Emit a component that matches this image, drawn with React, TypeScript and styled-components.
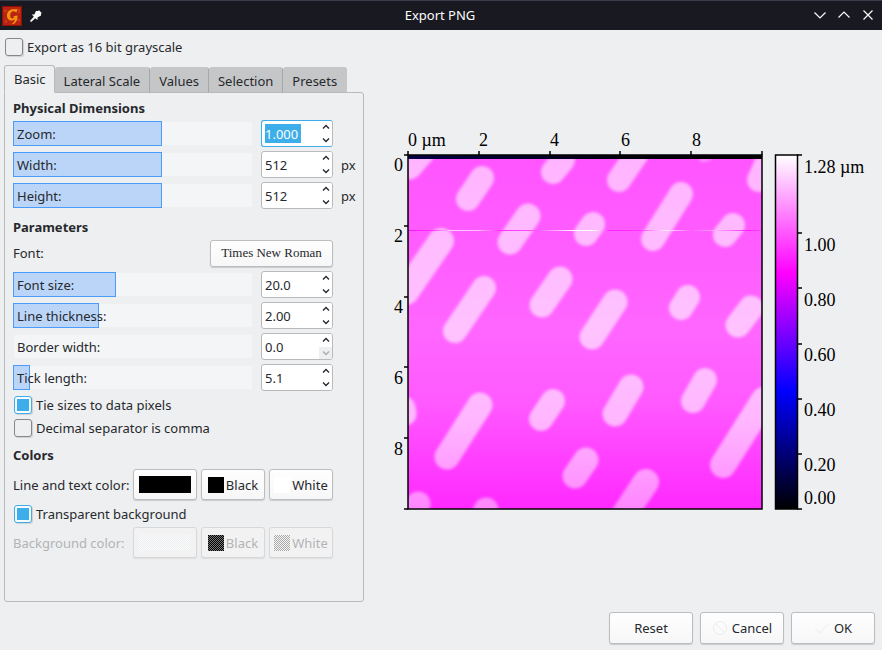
import React, { useState } from "react";
import styled, { createGlobalStyle } from "styled-components";

const sans = `"Noto Sans", "Open Sans", sans-serif`;
const serif = `"Liberation Serif", "Times New Roman", serif`;

const GlobalStyle = createGlobalStyle`
  *, *::before, *::after { box-sizing: border-box; }
  body { margin: 0; background: #eeeff1; }
  button, input { font: inherit; color: inherit; margin: 0; }
`;

const Dialog = styled.div`
  min-height: 100vh;
  display: flex;
  flex-direction: column;
  background: #eeeff1;
  color: #26292c;
  font: 13px/18px ${sans};
`;

const TitleBar = styled.header`
  display: grid;
  grid-template-columns: 72px 1fr 74px;
  align-items: center;
  height: 30px;
  background: #191921;
  border-top: 1px solid #3b3c4a;
  color: #fcfcfc;
`;

const TitleIcons = styled.div`
  display: flex;
  align-items: center;
  gap: 8px;
  padding-left: 2px;
`;

const Title = styled.h1`
  margin: 0;
  padding-bottom: 2px;
  font-size: 13px;
  font-weight: 400;
  text-align: center;
`;

const WindowButtons = styled.div`
  display: flex;
`;

const WindowButton = styled.button`
  display: grid;
  place-items: center;
  width: 24px;
  height: 24px;
  padding: 0 0 2px;
  border: 0;
  background: none;
`;

const Main = styled.main`
  flex: 1;
  display: grid;
  grid-template-columns: 364px minmax(0, 1fr);
  column-gap: 16px;
`;

const Settings = styled.div`
  display: flex;
  flex-direction: column;
  padding: 0 0 10px 4px;
`;

const TopRow = styled.div`
  height: 35px;
  display: flex;
  align-items: center;
  padding-bottom: 2px;
`;

const Tabs = styled.div`
  display: flex;
  align-items: flex-end;
  height: 28px;
  margin-bottom: -1px;
`;

const Tab = styled.button<{ $active?: boolean }>`
  position: relative;
  height: ${(p) => (p.$active ? 28 : 26)}px;
  padding: ${(p) => (p.$active ? "0 8px 0 9px" : "2px 9px 0")};
  border: 1px solid ${(p) => (p.$active ? "#b9babc" : "#c5c6c8")};
  border-bottom-color: ${(p) => (p.$active ? "#eeeff1" : "#b9babc")};
  border-right-color: ${(p) => (p.$active ? "#b9babc" : "#a6a7a9")};
  border-left-width: ${(p) => (p.$active ? 1 : 0)}px;
  border-radius: 3px 3px 0 0;
  background: ${(p) => (p.$active ? "#eeeff1" : "#c5c6c8")};
  z-index: ${(p) => (p.$active ? 1 : 0)};
  &:last-child { border-right-color: #c5c6c8; }
`;

const Panel = styled.div`
  flex: 1;
  padding: 4px 7px 4px 8px;
  border: 1px solid #b9babc;
  border-radius: 0 3px 3px 3px;
`;

const Heading = styled.h2`
  margin: 0;
  font-size: 13px;
  line-height: 23px;
  font-weight: 700;
`;

const Section = styled.section`
  & + & { margin-top: 7px; }
`;

const Rows = styled.div`
  display: flex;
  flex-direction: column;
  gap: 4px;
`;

const Row = styled.div`
  display: grid;
  grid-template-columns: minmax(0, 1fr) 72px 15px;
  column-gap: 8px;
  align-items: center;
`;

const Slider = styled.label`
  display: grid;
  grid-template-rows: 27px;
  align-items: center;
  & > * { grid-area: 1 / 1; }
`;

const Track = styled.span`
  height: 23px;
  margin: 0 1px;
  background: #f4f5f7;
`;

const Fill = styled.span`
  height: 25px;
  border: 1px solid #4b9bfa;
  background: #bbd5f9;
`;

const SliderText = styled.span`
  padding-left: 4px;
`;

const Range = styled.input`
  width: 100%;
  height: 26px;
  opacity: 0;
`;

const Spin = styled.div`
  display: grid;
  grid-template-columns: 1fr 13px;
  height: 27px;
  border: 1px solid #b9babc;
  border-radius: 3px;
  background: #fff;
  overflow: hidden;
  &:focus-within { border-color: #3daee9; }
`;

const FocusSpin = styled(Spin)`
  border-color: #3daee9 #b9babc #3daee9 #3daee9;
`;

const SpinValue = styled.input<{ $selected?: boolean }>`
  width: ${(p) => (p.$selected ? 36 : 50)}px;
  height: 19px;
  align-self: center;
  margin-left: 3px;
  padding: 0;
  border: 0;
  outline: 0;
  background: ${(p) => (p.$selected ? "#3daee9" : "transparent")};
  color: ${(p) => (p.$selected ? "#fcfcfc" : "inherit")};
`;

const Steps = styled.div`
  display: grid;
  grid-template-rows: 1fr 1fr;
`;

const Step = styled.button`
  display: grid;
  place-items: center;
  min-height: 0;
  padding: 0;
  border: 0;
  background: #fff;
  color: #232629;
  &:disabled { background: #eeeff1; color: #a9abad; }
`;

const Check = styled.label`
  display: flex;
  align-items: center;
  gap: 4px;
  height: 23px;
  padding-left: 1px;
`;

const Box = styled.input`
  appearance: none;
  display: grid;
  place-items: center;
  width: 18px;
  height: 18px;
  border: 1px solid #85878a;
  border-radius: 3px;
  box-shadow: 1px 1px 1px #cfd0d2;
  &:checked { border-color: #3daee9; background: #fafbfc; }
  &:checked::before { content: ""; width: 12px; height: 12px; background: #3daee9; }
`;

const Checks = styled.div`
  margin: 2px 0 -2px;
`;

const FontRow = styled.div`
  display: flex;
  align-items: center;
  justify-content: space-between;
  height: 28px;
  padding-right: 23px;
`;

const Button = styled.button`
  display: flex;
  align-items: center;
  justify-content: center;
  padding: 0;
  border: 1px solid #bcbdbf;
  border-radius: 3px;
  background: linear-gradient(#fefefe, #f7f7f8);
  box-shadow: 0 1px 1px #c9cacc;
  color: inherit;
  &:disabled {
    border-color: #d7d8da;
    background: #f2f2f3;
    color: #b2b3b5;
    box-shadow: 0 1px 1px #dcdddf;
  }
`;

const FontButton = styled(Button)`
  width: 123px;
  height: 27px;
  font-family: ${serif};
`;

const ColorRow = styled.div<{ $off?: boolean }>`
  display: grid;
  grid-template-columns: minmax(0, 1fr) 64px 64px 64px;
  column-gap: 4px;
  align-items: center;
  height: 35px;
  padding-right: 23px;
  white-space: nowrap;
  color: ${(p) => (p.$off ? "#b2b3b5" : "inherit")};
`;

const ColorButton = styled(Button)`
  height: 31px;
  gap: 2px;
`;

const Swatch = styled.span<{ $color: string; $wide?: boolean; $mesh?: string }>`
  width: ${(p) => (p.$wide ? 52 : 16)}px;
  height: ${(p) => (p.$wide ? 17 : 16)}px;
  background: ${(p) =>
    p.$mesh
      ? `repeating-conic-gradient(${p.$mesh} 0 25%, ${p.$color} 0 50%) 0 0 / 2px 2px`
      : p.$color};
`;

const Preview = styled.div`
  display: grid;
  place-items: center;
  svg { width: 100%; max-width: 478px; height: auto; }
`;

const Footer = styled.footer`
  display: flex;
  justify-content: flex-end;
  gap: 7px;
  padding: 0 7px 6px;
`;

const Action = styled(Button)`
  width: 84px;
  height: 32px;
  gap: 4px;
`;

function AppLogo() {
  return (
    <svg width="20" height="20" viewBox="0 0 20 20" aria-hidden="true">
      <rect width="20" height="20" fill="#8c1108" />
      <rect x="1" y="1" width="18" height="18" fill="#b92410" />
      <path d="M2 4h3v2H2zM15 13h3v2h-3zM3 14h2v3H3zM16 3h2v4h-2z" fill="#cb3a17" />
      <path
        d="M15.500 3 14.500 6.500 12 5.200C9.500 5 8.200 7 8.200 9.300c0 2.200.8 3.300 2.300 3.200L12.500 11 11 10.200 15.500 9.500C15.500 13 15.200 16.500 10.500 18.500L10.200 17.500C12.300 16.300 12.800 15 12.800 13.200 10.500 15.300 5 15.200 5 9.500 5 5.500 8 3 12 3.300z"
        fill="#f59311"
      />
    </svg>
  );
}

function PinIcon() {
  return (
    <svg width="12" height="12" viewBox="0 0 12 12" aria-hidden="true">
      <path d="M6 1h2l1-.7 2.700 2.700-.7 1v1.500L7.500 7.500V10L5.200 8.200 1.500 11.700H.3V10.500L3.800 6.800 1.800 4.500H4.300z" fill="#fcfcfc" />
    </svg>
  );
}

function Glyph({ d }: { d: string }) {
  return (
    <svg width="12" height="12" viewBox="0 0 12 12" fill="none" stroke="currentColor" strokeWidth="1.200" aria-hidden="true">
      <path d={d} />
    </svg>
  );
}

function StepArrow({ up }: { up?: boolean }) {
  return (
    <svg width="8" height="6" viewBox="0 0 8 6" fill="none" stroke="currentColor" strokeWidth="1.300" aria-hidden="true">
      <path d={up ? "M1 4.500 4 1.500 7 4.500" : "M1 1.500 4 4.500 7 1.500"} />
    </svg>
  );
}

type SettingProps = {
  label: string;
  value: string;
  fraction: number;
  unit?: string;
  selected?: boolean;
};

function Setting({ label, value, fraction, unit, selected }: SettingProps) {
  const [text, setText] = useState(value);
  const [level, setLevel] = useState(fraction);
  const Frame = selected ? FocusSpin : Spin;
  const digits = (value.split(".")[1] || "").length;
  const bump = (sign: number) => setText((Number(text) + sign * 10 ** -digits).toFixed(digits));
  return (
    <Row>
      <Slider>
        <Track />
        {level > 0 && <Fill style={{ width: `${level}%` }} />}
        <SliderText>{label}</SliderText>
        <Range type="range" min={0} max={100} value={level} onChange={(e) => setLevel(Number(e.target.value))} />
      </Slider>
      <Frame>
        <SpinValue aria-label={label} $selected={selected} value={text} onChange={(e) => setText(e.target.value)} />
        <Steps>
          <Step aria-label="Increase" onClick={() => bump(1)}><StepArrow up /></Step>
          <Step aria-label="Decrease" disabled={Number(text) === 0} onClick={() => bump(-1)}><StepArrow /></Step>
        </Steps>
      </Frame>
      {unit && <span>{unit}</span>}
    </Row>
  );
}

function CheckOption({ label, initial = false }: { label: string; initial?: boolean }) {
  const [on, setOn] = useState(initial);
  return (
    <Check>
      <Box type="checkbox" checked={on} onChange={() => setOn(!on)} />
      {label}
    </Check>
  );
}

/* Each grain: x1, y1, x2, y2 of its spine and its width. */
const grains = [
  [424, 152, 410, 168, 23], [482, 178, 468, 199, 24], [563, 160, 553, 172, 24],
  [636, 155, 619, 180, 24], [681, 194, 653, 239, 24], [733, 225, 725, 235, 24],
  [768, 160, 759, 180, 24], [528, 216, 510, 242, 25], [593, 224, 586, 234, 24],
  [441, 241, 406, 292, 26], [484, 288, 455, 331, 24], [560, 279, 542, 305, 25],
  [615, 302, 592, 337, 25], [688, 297, 681, 308, 24], [751, 308, 738, 325, 25],
  [480, 405, 447, 457, 25], [553, 401, 541, 419, 24], [404, 408, 405, 414, 23],
  [631, 387, 615, 414, 25], [705, 380, 693, 401, 24], [764, 400, 723, 465, 26],
  [586, 460, 575, 476, 25], [646, 482, 622, 518, 26], [418, 504, 412, 518, 25],
  [486, 510, 482, 518, 25],
];

const xTicks = [408, 479, 550, 620, 691, 762];
const yTicks = [155, 226, 297, 367, 438, 509];
const barTicks = [155, 233, 288, 344, 399, 454, 509];
const barLabels: [string, number][] = [
  ["1.28 µm", 173], ["1.00", 251], ["0.80", 306], ["0.60", 361], ["0.40", 416], ["0.20", 471], ["0.00", 504],
];

function Chart() {
  return (
    <svg viewBox="392 130 478 382" role="img" aria-label="Export preview">
      <defs>
        <linearGradient id="base" x1="0" y1="0" x2="0" y2="1">
          <stop offset="0" stopColor="#ff55ff" />
          <stop offset="0.25" stopColor="#ff5cff" />
          <stop offset="0.5" stopColor="#ff66ff" />
          <stop offset="0.7" stopColor="#ff59ff" />
          <stop offset="1" stopColor="#ff29ff" />
        </linearGradient>
        <linearGradient id="grain" gradientUnits="userSpaceOnUse" x1="0" y1="155" x2="0" y2="509">
          <stop offset="0" stopColor="#ffb4ff" />
          <stop offset="0.5" stopColor="#ffc2ff" />
          <stop offset="0.75" stopColor="#ffb6ff" />
          <stop offset="1" stopColor="#ff86ff" />
        </linearGradient>
        <linearGradient id="edge" x1="0" y1="0" x2="1" y2="0">
          <stop offset="0" stopColor="#000046" />
          <stop offset="0.6" stopColor="#00000c" />
          <stop offset="1" stopColor="#000" />
        </linearGradient>
        <linearGradient id="scan" gradientUnits="userSpaceOnUse" x1="408" y1="0" x2="762" y2="0">
          <stop offset="0" stopColor="#ff10ff" />
          <stop offset="0.07" stopColor="#ff30ff" />
          <stop offset="0.12" stopColor="#ffd0ff" />
          <stop offset="0.2" stopColor="#ffc0ff" />
          <stop offset="0.26" stopColor="#ff30ff" />
          <stop offset="0.36" stopColor="#ff50ff" />
          <stop offset="0.47" stopColor="#fff" />
          <stop offset="0.53" stopColor="#fff" />
          <stop offset="0.57" stopColor="#ff20ff" />
          <stop offset="0.65" stopColor="#ff30ff" />
          <stop offset="0.73" stopColor="#fff0ff" />
          <stop offset="0.8" stopColor="#ff60ff" />
          <stop offset="0.87" stopColor="#ffb0ff" />
          <stop offset="0.96" stopColor="#ff20ff" />
          <stop offset="1" stopColor="#ff40ff" />
        </linearGradient>
        <linearGradient id="scale" x1="0" y1="0" x2="0" y2="1">
          <stop offset="0" stopColor="#fff" />
          <stop offset="0.333" stopColor="#f0f" />
          <stop offset="0.667" stopColor="#00f" />
          <stop offset="1" stopColor="#000" />
        </linearGradient>
        <filter id="soft" filterUnits="userSpaceOnUse" x="390" y="140" width="390" height="390">
          <feGaussianBlur stdDeviation="1.700" />
        </filter>
        <clipPath id="field"><rect x="408" y="155" width="354" height="354" /></clipPath>
      </defs>
      <g clipPath="url(#field)">
        <rect x="408" y="155" width="354" height="354" fill="url(#base)" />
        <g filter="url(#soft)" stroke="url(#grain)" strokeLinecap="round">
          {grains.map(([x1, y1, x2, y2, w]) => (
            <line key={`${x1}-${y1}`} x1={x1} y1={y1} x2={x2} y2={y2} strokeWidth={w} />
          ))}
          <line x1="703" y1="158" x2="707" y2="157" strokeWidth="9" opacity="0.5" />
        </g>
        <rect x="408" y="230" width="354" height="1" fill="url(#scan)" />
        <rect x="408" y="155" width="354" height="4" fill="url(#edge)" />
      </g>
      <rect x="776" y="155" width="22" height="354" fill="url(#scale)" />
      <g fill="none" stroke="#000" strokeWidth="1.500">
        <rect x="408" y="155" width="354" height="354" />
        <rect x="775.500" y="155" width="22" height="354" />
        {xTicks.map((x) => <path key={x} d={`M${x} 151V155`} />)}
        {yTicks.map((y) => <path key={y} d={`M404 ${y}H408`} />)}
        {barTicks.map((y) => <path key={y} d={`M797 ${y}H802`} />)}
      </g>
      <g fill="#000" fontFamily={serif} fontSize="18">
        <text x="408" y="146">0 µm</text>
        {["2", "4", "6", "8"].map((t, i) => <text key={t} x={479 + i * 71} y="146">{t}</text>)}
        {["0", "2", "4", "6", "8"].map((t, i) => <text key={t} x="394" y={171 + i * 71}>{t}</text>)}
        {barLabels.map(([t, y]) => <text key={t} x="804" y={y}>{t}</text>)}
      </g>
    </svg>
  );
}

export default function App() {
  return (
    <Dialog>
      <GlobalStyle />
      <TitleBar>
        <TitleIcons><AppLogo /><PinIcon /></TitleIcons>
        <Title>Export PNG</Title>
        <WindowButtons>
          <WindowButton aria-label="Minimize"><Glyph d="M.5 3.500 6 9 11.500 3.500" /></WindowButton>
          <WindowButton aria-label="Maximize"><Glyph d="M.5 8.500 6 3 11.500 8.500" /></WindowButton>
          <WindowButton aria-label="Close"><Glyph d="M1.500 1.500 10.500 10.500M10.500 1.500 1.500 10.500" /></WindowButton>
        </WindowButtons>
      </TitleBar>
      <Main>
        <Settings>
          <TopRow><CheckOption label="Export as 16 bit grayscale" /></TopRow>
          <Tabs role="tablist">
            <Tab role="tab" aria-selected $active>Basic</Tab>
            <Tab role="tab">Lateral Scale</Tab>
            <Tab role="tab">Values</Tab>
            <Tab role="tab">Selection</Tab>
            <Tab role="tab">Presets</Tab>
          </Tabs>
          <Panel role="tabpanel">
            <Section>
              <Heading>Physical Dimensions</Heading>
              <Rows>
                <Setting label="Zoom:" value="1.000" fraction={62} selected />
                <Setting label="Width:" value="512" fraction={62} unit="px" />
                <Setting label="Height:" value="512" fraction={62} unit="px" />
              </Rows>
            </Section>
            <Section>
              <Heading>Parameters</Heading>
              <Rows>
                <FontRow>
                  <span>Font:</span>
                  <FontButton>Times New Roman</FontButton>
                </FontRow>
                <Setting label="Font size:" value="20.0" fraction={43} />
                <Setting label="Line thickness:" value="2.00" fraction={36} />
                <Setting label="Border width:" value="0.0" fraction={0} />
                <Setting label="Tick length:" value="5.1" fraction={7} />
              </Rows>
              <Checks>
                <CheckOption label="Tie sizes to data pixels" initial />
                <CheckOption label="Decimal separator is comma" />
              </Checks>
            </Section>
            <Section>
              <Heading>Colors</Heading>
              <ColorRow>
                <span>Line and text color:</span>
                <ColorButton aria-label="Line and text color"><Swatch $color="#000" $wide /></ColorButton>
                <ColorButton><Swatch $color="#000" />Black</ColorButton>
                <ColorButton><Swatch $color="#fff" />White</ColorButton>
              </ColorRow>
              <CheckOption label="Transparent background" initial />
              <ColorRow $off>
                <span>Background color:</span>
                <ColorButton aria-label="Background color" disabled><Swatch $color="#fafafa" $mesh="#eeeff1" $wide /></ColorButton>
                <ColorButton disabled><Swatch $color="#000" $mesh="#777" />Black</ColorButton>
                <ColorButton disabled><Swatch $color="#f6f6f6" $mesh="#a8a8a8" />White</ColorButton>
              </ColorRow>
            </Section>
          </Panel>
        </Settings>
        <Preview><Chart /></Preview>
      </Main>
      <Footer>
        <Action>Reset</Action>
        <Action>
          <svg width="16" height="16" viewBox="0 0 16 16" fill="none" stroke="#ececed" aria-hidden="true">
            <circle cx="8" cy="8" r="6.500" /><path d="M3.500 3.500 12.500 12.500" />
          </svg>
          Cancel
        </Action>
        <Action>
          <svg width="16" height="16" viewBox="0 0 16 16" fill="none" stroke="#ececed" aria-hidden="true">
            <path d="M1 8.500 5.500 13 15 3.500" />
          </svg>
          OK
        </Action>
      </Footer>
    </Dialog>
  );
}
